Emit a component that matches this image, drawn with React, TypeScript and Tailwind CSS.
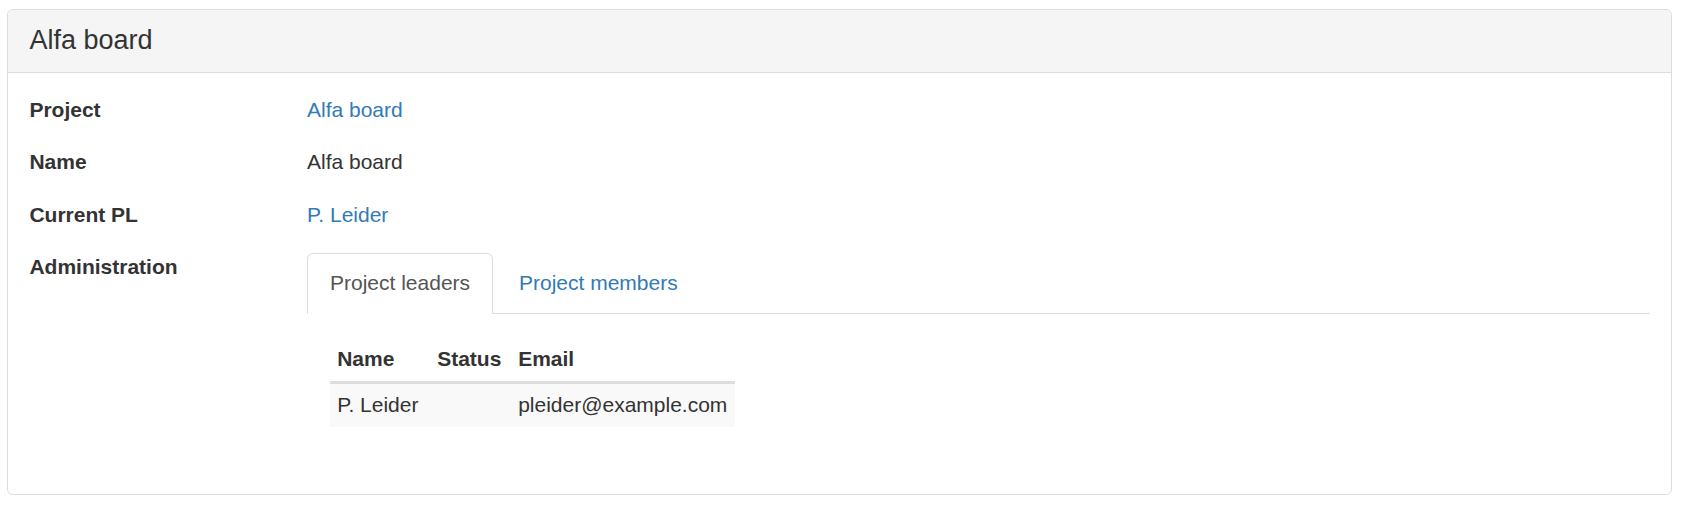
import { useState } from 'react'

const leaders = [{ name: 'P. Leider', status: '', email: 'pleider@example.com' }]

function Tabs() {
  const [tab, setTab] = useState<'leaders' | 'members'>('leaders')
  const tabs = [
    { id: 'leaders' as const, label: 'Project leaders' },
    { id: 'members' as const, label: 'Project members' },
  ]
  return (
    <div>
      <ul className="flex border-b border-[#ddd]">
        {tabs.map(t => (
          <li key={t.id} className="mr-[2.9px] -mb-px">
            <button
              type="button"
              onClick={() => setTab(t.id)}
              className={
                tab === t.id
                  ? 'block px-[22px] py-[15.2px] leading-[28.6px] border border-[#ddd] border-b-white bg-white rounded-t-[5.7px] text-[#555]'
                  : 'block px-[22px] py-[15.2px] leading-[28.6px] border border-transparent rounded-t-[5.7px] text-[#337ab7]'
              }
            >
              {t.label}
            </button>
          </li>
        ))}
      </ul>
      <div className="pt-[24px] pl-[23px]">
        <table className="border-collapse text-left">
          <thead>
            <tr className="border-b-[3px] border-[#ddd]">
              <th className="w-[100px] px-[7.15px] py-[7.15px] font-bold">Name</th>
              <th className="w-[81px] px-[7.15px] py-[7.15px] font-bold">Status</th>
              <th className="w-[224px] px-[7.15px] py-[7.15px] font-bold">Email</th>
            </tr>
          </thead>
          <tbody>
            {(tab === 'leaders' ? leaders : []).map((r, i) => (
              <tr key={i} className="bg-[#f9f9f9]">
                <td className="px-[7.15px] py-[7.15px]">{r.name}</td>
                <td className="px-[7.15px] py-[7.15px]">{r.status}</td>
                <td className="px-[7.15px] py-[7.15px]">{r.email}</td>
              </tr>
            ))}
          </tbody>
        </table>
      </div>
    </div>
  )
}

export default function App() {
  return (
    <div className="min-h-screen bg-white pt-[9px] pl-[7px] pr-[15px] text-[21px] leading-[28.6px] text-[#333]" style={{ fontFamily: '"Liberation Sans", Arial, sans-serif' }}>
      <div className="w-[1665px] border border-[#ddd] rounded-[5.7px] bg-white">
        <div className="bg-[#f5f5f5] border-b border-[#ddd] rounded-t-[5.7px] px-[21.4px] py-[14.3px]">
          <h3 className="text-[27px] leading-[33.4px] font-normal">Alfa board</h3>
        </div>
        <div className="px-[21.4px] pt-[23px] pb-[67px] grid grid-cols-[277.6px_1fr] gap-y-[23.8px]">
          <div className="font-bold">Project</div>
          <div><a className="text-[#337ab7]" href="#">Alfa board</a></div>

          <div className="font-bold">Name</div>
          <div>Alfa board</div>

          <div className="font-bold">Current PL</div>
          <div><a className="text-[#337ab7]" href="#">P. Leider</a></div>

          <div className="font-bold">Administration</div>
          <Tabs />
        </div>
      </div>
    </div>
  )
}
